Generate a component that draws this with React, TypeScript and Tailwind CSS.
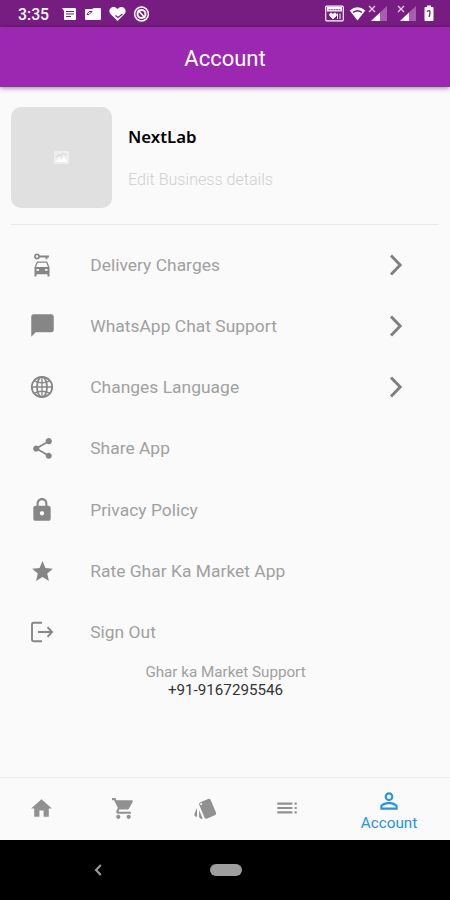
import type { ReactNode } from "react";
import {
  MdChatBubble, MdShare, MdLock, MdStar,
  MdHome, MdShoppingCart, MdStyle, MdToc, MdPersonOutline,
} from "react-icons/md";

function Globe() {
  return (
    <svg width="24" height="24" viewBox="0 0 24 24" fill="none" stroke="currentColor" strokeWidth="1.8">
      <circle cx="12" cy="12" r="10.2" />
      <ellipse cx="12" cy="12" rx="5" ry="10.2" />
      <path d="M12 2v20M2 12h20" strokeWidth="1.3" />
      <path d="M4.5 5.800Q12 9.800 19.500 5.800M4.500 18.200Q12 14.200 19.500 18.200" strokeWidth="1.400" />
    </svg>
  );
}

function CarKey() {
  return (
    <svg width="24" height="24" viewBox="0 0 24 24" fill="none" stroke="currentColor">
      <circle cx="7" cy="3.500" r="2.100" strokeWidth="1.600" />
      <path d="M9 3.500h10M16.500 3.500v2.800" strokeWidth="1.800" />
      <path d="M5.300 14L7.300 9.200h9.400l2 4.800" strokeWidth="1.300" />
      <path
        d="M4.500 14h15v9.500h-2V21.300h-11v2.200h-2zM6.500 16v1.800h2.500V16zM15 16v1.800h2.500V16z"
        fill="currentColor"
        fillRule="evenodd"
        stroke="none"
      />
    </svg>
  );
}

function SignOut() {
  return (
    <svg width="24" height="24" viewBox="0 0 24 24" fill="none" stroke="currentColor" strokeWidth="1.900">
      <path d="M12 2.700H3.500q-1.500 0-1.500 1.500v15.600q0 1.500 1.500 1.500H12" />
      <path d="M8 12h14M17.500 7.200l4.600 4.800-4.600 4.800" />
    </svg>
  );
}

function Chevron() {
  return (
    <svg width="14" height="24" viewBox="0 0 14 24" fill="none" stroke="#7f7f7f" strokeWidth="2.9">
      <path d="M2 2.500l9.200 9.500L2 21.500" />
    </svg>
  );
}

function Row({ icon, label, arrow }: { icon: ReactNode; label: string; arrow?: boolean }) {
  return (
    <div className="flex h-[61.3px] items-center pl-[30px] pr-[47px]">
      <div className="flex w-6 justify-center text-[#868686]">{icon}</div>
      <span className="ml-[36.2px] flex-1 whitespace-nowrap text-[17.4px] tracking-[0.03px] text-[#a0a0a0]">{label}</span>
      {arrow && <Chevron />}
    </div>
  );
}

function Signal() {
  return (
    <svg width="20" height="17" viewBox="0 0 20 17">
      <path d="M19 1v15H3z" fill="#a75db0" />
      <path d="M12 7.500V16H3z" fill="#fff" />
      <path d="M1 1l6 6M7 1L1 7" stroke="#e4cbe8" strokeWidth="1.300" />
    </svg>
  );
}

function StatusBar() {
  return (
    <div className="flex h-[27px] shrink-0 items-center bg-[#771d82] pl-[18px] pr-[16px] text-white">
      <span className="w-[43px] pt-[2px] text-[15.8px] font-medium leading-none">3:35</span>
      <svg width="90" height="18" viewBox="0 0 90 18">
        <path d="M1 3h13q1 0 1 1v10q0 1-1 1H4q-1 0-1-1V6z" fill="#fff" />
        <path d="M5 6.500h8M5 9h8M5 11.500h5" stroke="#771d82" strokeWidth="1.100" />
        <path d="M24 5q0-1 1-1h6l2-1h6q1 0 1 1v10q0 1-1 1H25q-1 0-1-1z" fill="#fff" />
        <path d="M26 9.500l2-3 3 0-3 3z" fill="none" stroke="#771d82" />
        <path d="M56.500 16l-7-7c-4-5 3-10 7-5 4-5 11 0 7 5z" fill="#fff" />
        <path d="M54.500 10.500l2.500 2 4.500-3.500" fill="none" stroke="#771d82" strokeWidth="1.200" />
        <circle cx="80.500" cy="9" r="6.900" fill="none" stroke="#fff" strokeWidth="1.500" />
        <circle cx="80.500" cy="9" r="4" fill="none" stroke="#fff" strokeWidth="2" />
        <path d="M77 5l7 8" stroke="#fff" strokeWidth="1.500" />
      </svg>
      <svg className="ml-auto" width="19" height="17" viewBox="0 0 19 17">
        <rect x=".7" y="1.200" width="17.600" height="14.600" rx="1" fill="none" stroke="#fff" strokeWidth="1.200" />
        <path d="M2 2h15v4.500H2z" fill="#fff" />
        <path d="M3.500 4.700h12" stroke="#8f4499" strokeDasharray="2 .5" />
        <path d="M8 14l-3-3c-1.500-2.500 1.500-4 3-1.500 1.500-2.500 4.500-1 3 1.500zM12.500 8.500v5.500M15 8.500v5.500" fill="#fff" stroke="#fff" />
      </svg>
      <svg className="ml-[5px]" width="17" height="17" viewBox="0 0 17 17">
        <path d="M8.500 15.500L.7 5.500q7.800-6.500 15.600 0z" fill="#fff" />
        <path d="M4 7.500q4.500-3.500 9 0" fill="none" stroke="#771d82" strokeWidth="1.300" />
      </svg>
      <div className="ml-[2px] flex gap-[9px]"><Signal /><Signal /></div>
      <svg className="ml-[7px]" width="10" height="17" viewBox="0 0 10 17">
        <path d="M3 .5h4V2h1.500q1 0 1 1v12q0 1-1 1h-7q-1 0-1-1V3q0-1 1-1H3z" fill="#fff" />
        <path d="M3 6.500q3-2 3 .5T5 12" fill="none" stroke="#771d82" strokeWidth="1.300" />
      </svg>
    </div>
  );
}

export default function App() {
  return (
    <div className="flex h-[900px] w-[450px] flex-col overflow-hidden bg-[#fafafa] font-[Roboto,'Liberation_Sans',sans-serif]">
      <StatusBar />
      <header className="flex h-[60px] shrink-0 items-center justify-center bg-[#9c27b0] pt-[2px] text-[22px] text-white shadow-[0_1px_5px_rgba(0,0,0,0.45)]">
        Account
      </header>

      <section className="mx-[11px] flex h-[138px] shrink-0 border-b border-[#e9e9e9] pt-5">
        <div className="flex h-[101px] w-[101px] items-center justify-center rounded-[10px] bg-[#e0e0e0]">
          <svg width="15" height="13" viewBox="0 0 15 13">
            <rect width="15" height="13" rx="1" fill="#efefef" />
            <path d="M1.500 11L5 7l2.500 2L10 5.500l3.500 5.500z" fill="#fff" />
            <path d="M1.500 6.500L5 3.500l2 1.500L9 2.500l4 1.500" fill="none" stroke="#dcdcdc" strokeWidth="1.300" />
          </svg>
        </div>
        <div className="ml-4 flex flex-col pt-[18px]">
          <span className="font-['Noto_Sans',sans-serif] text-[16.8px] font-semibold leading-6 text-black">NextLab</span>
          <span className="mt-[19px] whitespace-nowrap text-[16.1px] font-light leading-6 text-[#cfcfcf]">Edit Business details</span>
        </div>
      </section>

      <main className="flex-1 pt-[9px]">
        <Row icon={<CarKey />} label="Delivery Charges" arrow />
        <Row icon={<MdChatBubble size={27} className="shrink-0" />} label="WhatsApp Chat Support" arrow />
        <Row icon={<Globe />} label="Changes Language" arrow />
        <Row icon={<MdShare size={25} className="shrink-0" />} label="Share App" />
        <Row icon={<MdLock size={26} className="shrink-0" />} label="Privacy Policy" />
        <Row icon={<MdStar size={25} className="shrink-0" />} label="Rate Ghar Ka Market App" />
        <Row icon={<SignOut />} label="Sign Out" />
        <div className="flex flex-col items-center pt-px pl-px text-[15.2px] leading-[17.500px]">
          <span className="text-[#a0a0a0]">Ghar ka Market Support</span>
          <span className="text-[#333]">+91-9167295546</span>
        </div>
      </main>

      <nav className="flex h-[63px] shrink-0 items-center border-t border-[#ececec] text-[#919191]">
        <div className="flex w-[82px] justify-center pb-[2px]"><MdHome size={25} /></div>
        <div className="flex w-[82px] justify-center pb-[2px]"><MdShoppingCart size={25} /></div>
        <div className="flex w-[82px] justify-center pb-[2px]"><MdStyle size={25} /></div>
        <div className="flex w-[82px] justify-center pb-[2px]"><MdToc size={26} /></div>
        <div className="flex w-[122px] flex-col items-center pt-[2px] text-[#2591ea]">
          <MdPersonOutline size={26} />
          <span className="text-[15.300px] leading-[19px]">Account</span>
        </div>
      </nav>

      <footer className="flex h-[60px] shrink-0 items-center bg-black">
        <svg className="ml-[94px]" width="8" height="12" viewBox="0 0 8 12" fill="none" stroke="#9e9e9e" strokeWidth="2">
          <path d="M6.800 1L2 6l4.800 5" />
        </svg>
        <div className="ml-[108px] h-3 w-[32px] rounded-full bg-[#9e9e9e]" />
      </footer>
    </div>
  );
}
